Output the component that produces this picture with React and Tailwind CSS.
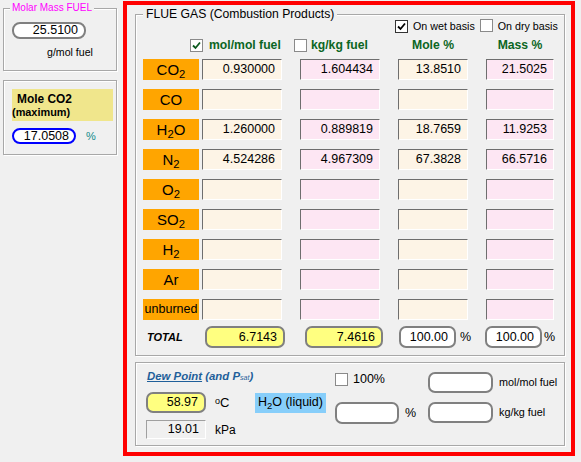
import React from "react";

function CheckOn() {
  return (
    <span className="inline-flex w-[13px] h-[13px] shrink-0 items-center justify-center bg-white border border-[#333333]">
      <svg width="9" height="9" viewBox="0 0 9 9">
        <path d="M1 4.5 L3.5 7 L8 1.5" fill="none" stroke="#000" strokeWidth="1.8" />
      </svg>
    </span>
  );
}

function CheckGreen() {
  return (
    <span className="inline-flex w-[13px] h-[13px] shrink-0 items-center justify-center bg-white border border-[#8a8a8a]">
      <svg width="9" height="9" viewBox="0 0 9 9">
        <path d="M1 4.5 L3.5 7 L8 1.5" fill="none" stroke="#0b5a1e" strokeWidth="1.8" />
      </svg>
    </span>
  );
}

function CheckOff() {
  return (
    <span className="inline-block w-[13px] h-[13px] shrink-0 bg-white border border-[#8a8a8a]" />
  );
}

const cellBase =
  "h-[21px] border border-t-[#6e6e6e] border-l-[#6e6e6e] border-r-white border-b-white flex items-center justify-end pr-[6px] text-[12.5px] leading-none";

const rows = [
  { label: <>CO<sub>2</sub></>, v: ["0.930000", "1.604434", "13.8510", "21.5025"] },
  { label: "CO", v: ["", "", "", ""] },
  { label: <>H<sub>2</sub>O</>, v: ["1.260000", "0.889819", "18.7659", "11.9253"] },
  { label: <>N<sub>2</sub></>, v: ["4.524286", "4.967309", "67.3828", "66.5716"] },
  { label: <>O<sub>2</sub></>, v: ["", "", "", ""] },
  { label: <>SO<sub>2</sub></>, v: ["", "", "", ""] },
  { label: <>H<sub>2</sub></>, v: ["", "", "", ""] },
  { label: "Ar", v: ["", "", "", ""] },
  { label: "unburned", v: ["", "", "", ""], small: true },
];

function Row({ r }) {
  return (
    <div className="flex h-[21px]">
      <div
        className={
          r.small
            ? "w-[56px] h-[21px] bg-[#ffa500] flex items-center justify-center text-[12.5px] leading-none"
            : "w-[56px] h-[21px] bg-[#ffa500] flex items-center justify-center text-[15px] leading-none"
        }
      >
        <span>{r.label}</span>
      </div>
      <div className={`${cellBase} ml-[3px] w-[80px] bg-[#fdf4e6]`}>{r.v[0]}</div>
      <div className={`${cellBase} ml-[18px] w-[80px] bg-[#fde6f3]`}>{r.v[1]}</div>
      <div className={`${cellBase} ml-[18px] w-[70px] bg-[#fdf4e6]`}>{r.v[2]}</div>
      <div className={`${cellBase} ml-[18px] w-[68px] bg-[#fde6f3]`}>{r.v[3]}</div>
    </div>
  );
}

const round =
  "rounded-[7px] border-2 border-[#808080] flex items-center justify-end pr-[6px] text-[12.5px] leading-none";

export default function App() {
  return (
    <div className="w-[581px] h-[462px] bg-[#f0f0f0] flex font-['Liberation_Sans',Arial,sans-serif] text-black overflow-hidden">
      {/* left column */}
      <div className="w-[123px] shrink-0 pl-[3px] pr-[6px]">
        <div className="relative mt-[8px] h-[63px] border border-[#a8a8a8] shadow-[inset_1px_1px_0_#ffffff,1px_1px_0_#ffffff]">
          <span className="absolute left-[6px] top-[-8px] px-[2px] bg-[#f0f0f0] text-[10px] leading-[14px] text-[#ff00ff]">
            Molar Mass FUEL
          </span>
          <div className={`${round} ml-[8px] mt-[13px] w-[74px] h-[17px] rounded-[8px] bg-white`}>25.5100</div>
          <div className="ml-[43px] mt-[7px] text-[10.6px] leading-[12px]">g/mol fuel</div>
        </div>
        <div className="mt-[9px] h-[75px] border border-[#a8a8a8] shadow-[inset_1px_1px_0_#ffffff,1px_1px_0_#ffffff]">
          <div className="ml-[8px] mt-[8px] w-[101px] h-[32px] bg-[#f0e68c] flex flex-col justify-center">
            <div className="pl-[5px] text-[11.9px] font-bold leading-[13px]">Mole CO2</div>
            <div className="text-[10.9px] font-bold leading-[12px]">(maximum)</div>
          </div>
          <div className="flex items-center mt-[7px] ml-[8px]">
            <div className="w-[64px] h-[16px] rounded-[8px] border-2 border-[#0000ff] bg-white flex items-center justify-end pr-[5px] text-[12.5px] leading-none">
              17.0508
            </div>
            <span className="ml-[10px] text-[11px] leading-none text-[#138a8a]">%</span>
          </div>
        </div>
      </div>

      {/* red frame */}
      <div className="mt-[1px] w-[452px] h-[455px] border-4 border-[#ff0000] shrink-0">
        {/* flue gas group */}
        <div className="relative ml-[8px] mt-[9px] w-[430px] h-[342px] border border-[#a8a8a8] shadow-[inset_1px_1px_0_#ffffff,1px_1px_0_#ffffff]">
          <span className="absolute left-[7px] top-[-9px] px-[3px] bg-[#f0f0f0] text-[12.2px] leading-[16px]">
            FLUE GAS (Combustion Products)
          </span>
          <div className="flex items-center mt-[5px] ml-[259px] h-[13px] text-[10.7px] leading-none">
            <CheckOn />
            <span className="ml-[5px]">On wet basis</span>
            <span className="ml-[5px]">
              <CheckOff />
            </span>
            <span className="ml-[5px]">On dry basis</span>
          </div>
          <div className="flex items-center mt-[6px] ml-[7px] h-[13px] text-[12.2px] font-bold leading-none text-[#0b6623]">
            <div className="w-[56px] shrink-0" />
            <div className="-ml-[9px] w-[80px] shrink-0 flex items-center">
              <CheckGreen />
              <span className="ml-[6px] whitespace-nowrap">mol/mol fuel</span>
            </div>
            <div className="ml-[24px] w-[80px] shrink-0 flex items-center">
              <CheckOff />
              <span className="ml-[4px] whitespace-nowrap">kg/kg fuel</span>
            </div>
            <div className="ml-[24px] w-[70px] shrink-0 text-center">Mole %</div>
            <div className="ml-[18px] w-[68px] shrink-0 text-center">Mass %</div>
          </div>
          <div className="ml-[7px] mt-[7px] flex flex-col gap-[9px]">
            {rows.map((r, i) => (
              <Row key={i} r={r} />
            ))}
          </div>
          <div className="ml-[7px] mt-[6px] flex items-center h-[22px]">
            <div className="w-[62px] pl-[4px] text-[11px] font-bold italic leading-none">TOTAL</div>
            <div className={`${round} w-[80px] h-[22px] bg-[#ffff80]`}>6.7143</div>
            <div className={`${round} ml-[20px] w-[78px] h-[22px] bg-[#ffff80]`}>7.4616</div>
            <div className="ml-[16px] w-[86px] flex items-center">
              <div className={`${round} w-[57px] h-[22px] bg-white`}>100.00</div>
              <span className="ml-[4px] text-[12.5px] leading-none">%</span>
            </div>
            <div className="flex items-center">
              <div className={`${round} w-[57px] h-[22px] bg-white`}>100.00</div>
              <span className="ml-[2px] text-[12.5px] leading-none">%</span>
            </div>
          </div>
        </div>

        {/* dew point group */}
        <div className="ml-[8px] mt-[6px] w-[430px] h-[84px] border border-[#a8a8a8] shadow-[inset_1px_1px_0_#ffffff,1px_1px_0_#ffffff] flex pl-[10px]">
          <div className="w-[189px]">
            <div className="mt-[6px] pl-[1px] h-[14px] text-[11.4px] font-bold italic leading-[14px] text-[#1f5f9a] whitespace-nowrap">
              <span className="underline">Dew Point</span> (and P
              <span className="text-[7px] font-normal">sat</span>)
            </div>
            <div className="mt-[9px] flex items-center">
              <div className={`${round} w-[60px] h-[21px] bg-[#ffff80]`}>58.97</div>
              <div className="w-[49px] pl-[9px] text-[13px] leading-none">
                <span className="relative top-[-3px] text-[9px]">o</span>C
              </div>
              <div className="w-[71px] h-[20px] bg-[#87cefa] flex items-center justify-center text-[12.5px] leading-none">
                <span>
                  H<sub>2</sub>O (liquid)
                </span>
              </div>
            </div>
            <div className="mt-[7px] flex items-center">
              <div className="w-[60px] h-[19px] border border-t-[#a0a0a0] border-l-[#a0a0a0] border-r-white border-b-white flex items-center justify-end pr-[6px] text-[12.5px] leading-none">
                19.01
              </div>
              <span className="ml-[9px] text-[12px] leading-none">kPa</span>
            </div>
          </div>
          <div className="w-[93px]">
            <div className="mt-[10px] flex items-center h-[13px]">
              <CheckOff />
              <span className="ml-[5px] text-[12.5px] leading-none">100%</span>
            </div>
            <div className="mt-[16px] flex items-center">
              <div className={`${round} w-[64px] h-[22px] bg-white`} />
              <span className="ml-[6px] text-[12.5px] leading-none">%</span>
            </div>
          </div>
          <div>
            <div className="mt-[9px] flex items-center">
              <div className={`${round} w-[65px] h-[21px] bg-white`} />
              <span className="ml-[6px] text-[10.8px] leading-none">mol/mol fuel</span>
            </div>
            <div className="mt-[9px] flex items-center">
              <div className={`${round} w-[65px] h-[21px] bg-white`} />
              <span className="ml-[6px] text-[10.8px] leading-none">kg/kg fuel</span>
            </div>
          </div>
        </div>
      </div>
    </div>
  );
}
